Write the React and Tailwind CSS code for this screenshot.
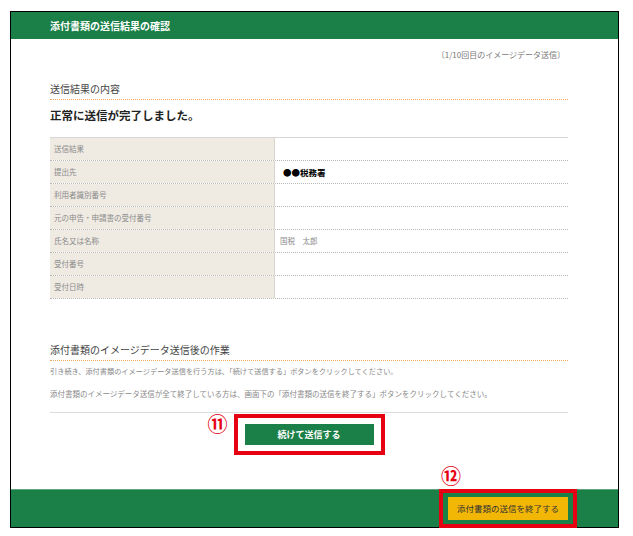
import React from 'react';

const rows = [
  { label: '送信結果', value: '' },
  { label: '提出先', value: '●●税務署', strong: true },
  { label: '利用者識別番号', value: '' },
  { label: '元の申告・申請書の受付番号', value: '' },
  { label: '氏名又は名称', value: '国税　太郎' },
  { label: '受付番号', value: '' },
  { label: '受付日時', value: '' },
];

const font = { fontFamily: '"Noto Sans CJK JP", "Noto Sans", sans-serif' };

const App = () => {
  return (
    <div className="relative w-[633px] h-[536px] bg-white overflow-hidden" style={font}>
      {/* frame */}
      <div className="absolute left-[10px] top-[11px] w-[609px] h-[517px] border border-black flex flex-col">
        <div className="h-[27px] bg-[#1b7f48] flex items-center pl-[39px] text-white text-[10px] font-bold">
          添付書類の送信結果の確認
        </div>

        <div className="flex-1 pl-[39px] pr-[50px]">
          <div className="mt-[11px] text-right text-[8px] leading-[10px] text-[#777] pr-[3px]">
            〔1/10回目のイメージデータ送信〕
          </div>

          <div className="mt-[24px] pb-[5px] text-[10px] leading-[10px] text-[#444] border-b border-dotted border-[#eea860]">
            送信結果の内容
          </div>
          <div className="mt-[8px] text-[11.5px] leading-[14px] font-bold text-[#222]">
            正常に送信が完了しました。
          </div>

          <div className="mt-[15px] border-t border-[#d6d6d6]">
            {rows.map((row, i) => (
              <div key={i} className="flex h-[23px] border-b border-dotted border-[#b8b8b8]">
                <div className="w-[225px] bg-[#efebe3] border-r border-[#d9d5cc] flex items-center pl-[4px] text-[7.5px] text-[#8a8a8a]">
                  {row.label}
                </div>
                <div
                  className={
                    row.strong
                      ? 'flex-1 flex items-center pl-[8px] text-[8.5px] font-bold text-black'
                      : 'flex-1 flex items-center pl-[5px] text-[7.5px] text-[#8a8a8a]'
                  }
                >
                  {row.value}
                </div>
              </div>
            ))}
          </div>

          <div className="mt-[46px] pb-[5px] text-[10px] leading-[10px] text-[#444] border-b border-dotted border-[#eea860]">
            添付書類のイメージデータ送信後の作業
          </div>
          <div className="mt-[5px] text-[7.2px] leading-[10px] text-[#888]">
            引き続き、添付書類のイメージデータ送信を行う方は、「続けて送信する」ボタンをクリックしてください。
          </div>
          <div className="mt-[13px] text-[7.5px] leading-[10px] text-[#888]">
            添付書類のイメージデータ送信が全て終了している方は、画面下の「添付書類の送信を終了する」ボタンをクリックしてください。
          </div>

          <div className="mt-[13px] border-t border-[#dcdcdc]" />

          <div className="flex justify-center mt-[1px]">
            <div className="relative border-4 border-[#e60012] px-[7px] py-[6px]">
              <div className="w-[129px] h-[21px] bg-[#1b7f48] flex items-center justify-center text-white text-[9px] font-bold">
                続けて送信する
              </div>
              <span className="absolute left-[-30px] top-[-4px] text-[20px] leading-[20px] font-bold text-[#e60012]">⑪</span>
            </div>
          </div>
        </div>

        <div className="h-[38px] bg-[#1b7f48] border-t border-[#5fa57d] flex items-center justify-end pr-[50px]">
          <div className="w-[120px] h-[23px] bg-[#f2b705] flex items-center justify-center text-[#333] text-[8.5px]">
            添付書類の送信を終了する
          </div>
        </div>
      </div>

      {/* annotation: end button */}
      <div className="absolute left-[439px] top-[489px] w-[138px] h-[39px] border-4 border-[#e60012]" />
      <span className="absolute left-[441px] top-[466px] text-[20px] leading-[20px] font-bold text-[#e60012]">⑫</span>
    </div>
  );
};

export default App;
